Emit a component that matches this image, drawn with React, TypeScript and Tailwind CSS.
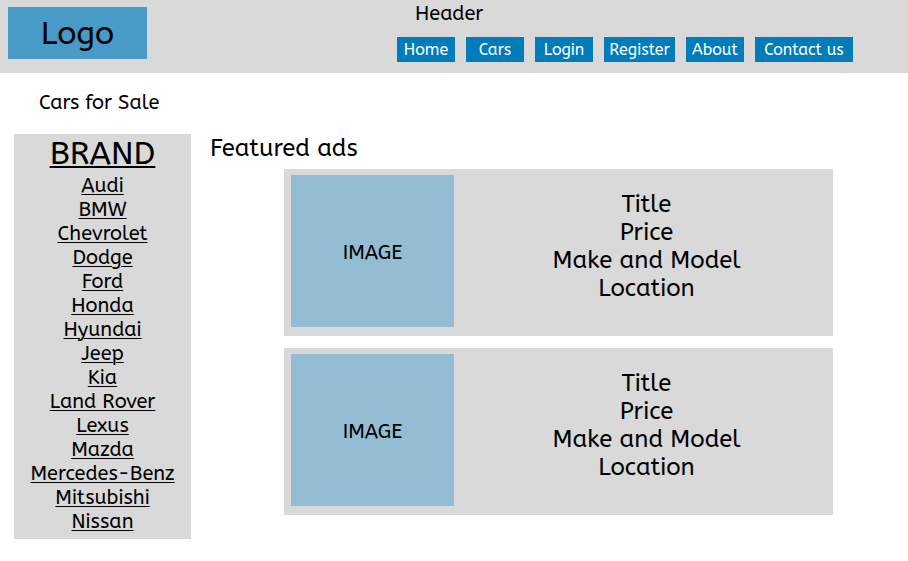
const navItems = [
  { label: "Home", width: "w-[58px]" },
  { label: "Cars", width: "w-[58px]" },
  { label: "Login", width: "w-[58px]" },
  { label: "Register", width: "w-[71px]" },
  { label: "About", width: "w-[58px]" },
  { label: "Contact us", width: "w-[98px]" },
];

const brands = [
  "Audi",
  "BMW",
  "Chevrolet",
  "Dodge",
  "Ford",
  "Honda",
  "Hyundai",
  "Jeep",
  "Kia",
  "Land Rover",
  "Lexus",
  "Mazda",
  "Mercedes-Benz",
  "Mitsubishi",
  "Nissan",
];

const ads = [1, 2];

function Header() {
  return (
    <header className="flex items-start justify-between bg-[#d9d9d9] pr-[55px] pb-[11px] pl-2">
      <div className="mt-[7px] flex h-[52px] w-[139px] items-center justify-center bg-[#489bc6] pt-[2px] text-[32px]">
        Logo
      </div>
      <div className="pt-[2px]">
        <p className="pl-[18px] text-xl leading-6">Header</p>
        <nav className="mt-[11px] flex gap-[11px]">
          {navItems.map((item) => (
            <a
              key={item.label}
              href="#"
              className={`${item.width} flex h-[25px] items-center justify-center bg-[#007cba] text-base whitespace-nowrap text-white`}
            >
              {item.label}
            </a>
          ))}
        </nav>
      </div>
    </header>
  );
}

function BrandList() {
  return (
    <aside className="w-[177px] shrink-0 bg-[#d9d9d9] pb-[5px] text-center">
      <h2 className="text-[32px] leading-10 underline decoration-2 underline-offset-2">BRAND</h2>
      <ul className="text-xl leading-6">
        {brands.map((brand) => (
          <li key={brand}>
            <a href="#" className="underline decoration-1 underline-offset-2">
              {brand}
            </a>
          </li>
        ))}
      </ul>
    </aside>
  );
}

function AdCard() {
  return (
    <article className="flex items-start gap-[6px] bg-[#d9d9d9] pt-[6px] pb-[9px] pl-[7px]">
      <div className="flex h-[152px] w-[163px] shrink-0 items-center justify-center bg-[#92bdd3] pt-[3px] text-xl">
        IMAGE
      </div>
      <div className="flex-1 pt-[15px] text-center text-2xl leading-7">
        <h3>Title</h3>
        <p>Price</p>
        <p>Make and Model</p>
        <p>Location</p>
      </div>
    </article>
  );
}

export default function App() {
  return (
    <div className="min-h-screen bg-white font-['ABeeZee','Noto_Sans',sans-serif] text-black">
      <Header />
      <h1 className="mt-[18px] pl-[39px] text-xl leading-6">Cars for Sale</h1>
      <div className="mt-[19px] flex items-start gap-[19px] pr-[75px] pl-[14px]">
        <BrandList />
        <main className="flex-1">
          <h2 className="text-2xl leading-7">Featured ads</h2>
          <div className="mt-[7px] ml-[74px] flex flex-col gap-3">
            {ads.map((ad) => (
              <AdCard key={ad} />
            ))}
          </div>
        </main>
      </div>
    </div>
  );
}
